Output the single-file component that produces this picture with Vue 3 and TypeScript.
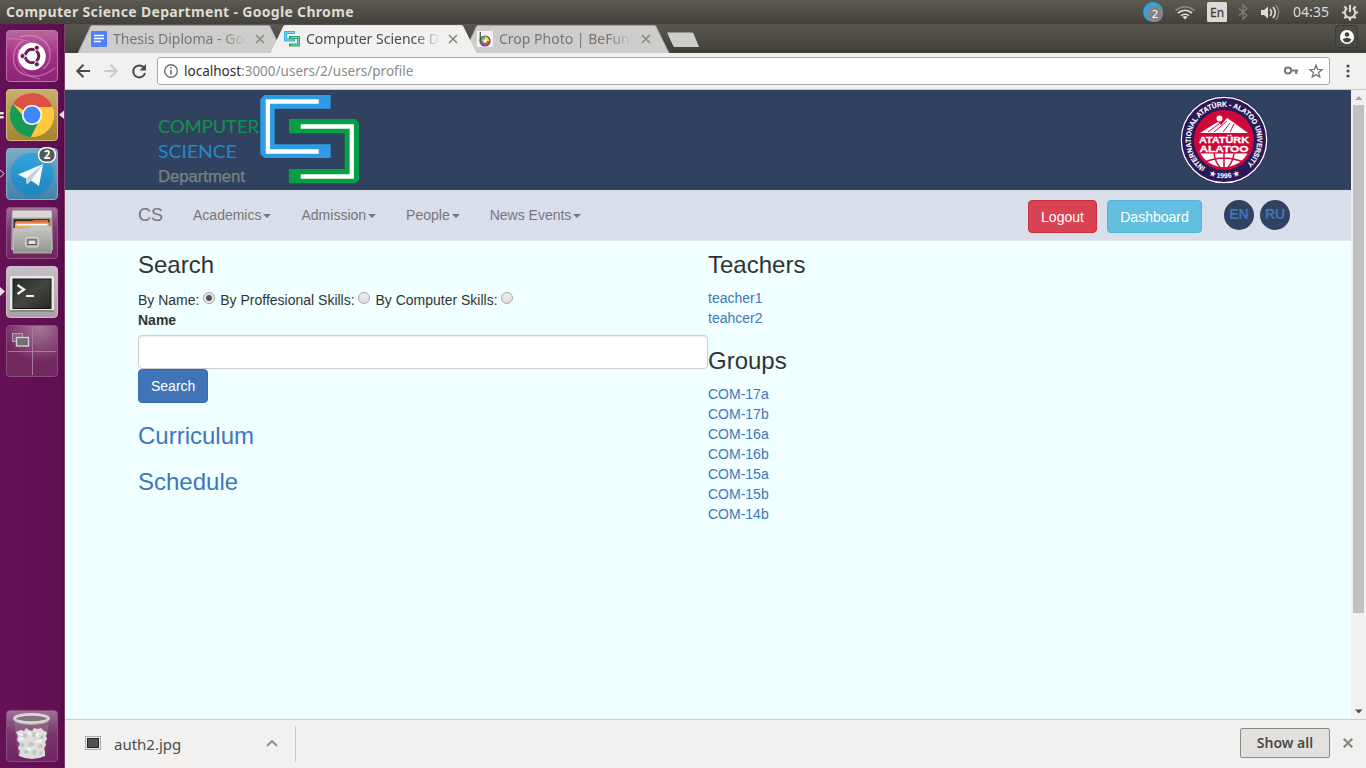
<script setup lang="ts">
import { ref } from 'vue'

interface Tab { title: string; icon: string; active: boolean }

const tabs: Tab[] = [
  { title: 'Thesis Diploma - Goo', icon: 'docs', active: false },
  { title: 'Computer Science D', icon: 'cs', active: true },
  { title: 'Crop Photo | BeFunk', icon: 'befunky', active: false },
]
const menu: string[] = ['Academics', 'Admission', 'People', 'News Events']
const filters: string[] = ['By Name:', 'By Proffesional Skills:', 'By Computer Skills:']
const teachers: string[] = ['teacher1', 'teahcer2']
const groups: string[] = ['COM-17a', 'COM-17b', 'COM-16a', 'COM-16b', 'COM-15a', 'COM-15b', 'COM-14b']
const selected = ref<number>(0)
const query = ref<string>('')
</script>

<template>
  <div class="desktop">
    <header class="topbar">
      <span class="wtitle">Computer Science Department - Google Chrome</span>
      <svg class="indicators" width="236" height="24" viewBox="1130 0 236 24">
        <circle cx="1153" cy="12" r="10" fill="#2ca5e0" />
        <circle cx="1155" cy="14" r="8" fill="#858585" />
        <text x="1155" y="18" font-size="11" text-anchor="middle" fill="#fff">2</text>
        <g fill="none" stroke-width="1.6">
          <path d="M1175.500 10.500q9.500-7.500 19 0" stroke="#8a8880" />
          <path d="M1178 13q7-5.500 14 0M1181 15.700q4-3 8 0" stroke="#e4e0d8" />
        </g>
        <path d="M1182.500 17q2.500-2 5 0l-2.500 2.500z" fill="#e4e0d8" />
        <rect x="1207" y="2" width="20" height="20" rx="1.500" fill="#dfdbd2" />
        <text x="1210" y="17" font-size="13" fill="#403f3a" stroke="#403f3a" stroke-width=".3" textLength="14" lengthAdjust="spacingAndGlyphs">En</text>
        <path d="M1239 8.500l8 7-4 3.500v-14l4 3.500-8 7" fill="none" stroke="#817f77" stroke-width="1.300" />
        <path d="M1261 10h3l4-3.500v12l-4-3.500h-3z" fill="#dfdbd2" />
        <path d="M1270 9q3 3.500 0 7M1273 7q4.500 5.500 0 11" fill="none" stroke="#dfdbd2" stroke-width="1.600" />
        <path d="M1276 5q5.500 7.500 0 15" fill="none" stroke="#8a8880" stroke-width="1.500" />
        <text x="1293" y="17" font-size="14" fill="#dfdbd2" textLength="36">04:35</text>
        <g fill="none" stroke="#dfdbd2">
          <path d="M1347.200 8.200a5.200 5.200 0 1 0 5.600 0" stroke-width="2" />
          <path d="M1350 5v7" stroke-width="2" />
          <path d="M1342 12.500h3M1355 12.500h3M1344.300 6.500l2 2M1355.700 6.500l-2 2M1344.300 18.300l2-2M1355.700 18.300l-2-2M1350 18v2.500" stroke-width="2.200" />
        </g>
      </svg>
    </header>

    <div class="workspace">
      <aside class="launcher">
        <svg width="65" height="744" viewBox="0 24 65 744">
          <defs>
            <linearGradient id="ubu" x1="0" y1="0" x2="0" y2="1"><stop offset="0" stop-color="#b9689d" /><stop offset=".5" stop-color="#a52e86" /><stop offset="1" stop-color="#8d2474" /></linearGradient>
            <linearGradient id="gold" x1="0" y1="0" x2="0" y2="1"><stop offset="0" stop-color="#c7b06e" /><stop offset="1" stop-color="#a58330" /></linearGradient>
            <linearGradient id="tgt" x1="0" y1="0" x2="0" y2="1"><stop offset="0" stop-color="#80a9c2" /><stop offset="1" stop-color="#4080ac" /></linearGradient>
            <linearGradient id="tg" x1="0" y1="0" x2="0" y2="1"><stop offset="0" stop-color="#34a6dc" /><stop offset="1" stop-color="#1d85bd" /></linearGradient>
            <linearGradient id="glass" x1="0" y1="0" x2="0" y2="1"><stop offset="0" stop-color="#a27299" /><stop offset=".45" stop-color="#76366c" /><stop offset="1" stop-color="#6e2560" /></linearGradient>
            <linearGradient id="term" x1="0" y1="0" x2="0" y2="1"><stop offset="0" stop-color="#c8bec7" /><stop offset="1" stop-color="#aba0aa" /></linearGradient>
            <linearGradient id="cab" x1="0" y1="0" x2="0" y2="1"><stop offset="0" stop-color="#c8c8c4" /><stop offset="1" stop-color="#92928f" /></linearGradient>
            <linearGradient id="scr" x1="0" y1="0" x2="1" y2="1"><stop offset="0" stop-color="#292927" /><stop offset=".5" stop-color="#444541" /><stop offset="1" stop-color="#272725" /></linearGradient>
            <radialGradient id="shine" cx=".65" cy="0" r=".75"><stop offset="0" stop-color="#fff" stop-opacity=".38" /><stop offset="1" stop-color="#fff" stop-opacity="0" /></radialGradient>
          </defs>

          <!-- dash -->
          <rect x="6.500" y="30.500" width="51" height="51" rx="3.500" fill="url(#ubu)" stroke="#bd74a8" />
          <g fill="none" stroke="#e2a8d0" stroke-opacity=".5">
            <path d="M20 37c16-5 31 4 30 19 0 6-3 10-7 13" stroke-width="1.500" />
            <path d="M55 68c-16 13-37 10-41-5-2-10 2-18 9-22" stroke-width="1.500" />
            <path d="M8 39c20-2 38 8 34 25" /><path d="M40 79c-18-3-26-16-21-30" />
          </g>
          <circle cx="32" cy="56.500" r="13.800" fill="#fff" />
          <circle cx="32" cy="56" r="6.800" fill="none" stroke="#681d56" stroke-width="3" />
          <g stroke="#fff" stroke-width="1.400"><path d="M32 56h-10M32 56l5.500-9M32 56l5.500 9" /></g>
          <circle cx="32" cy="56" r="5" fill="#fff" />
          <g fill="#681d56" stroke="#fff" stroke-width=".8"><circle cx="22.500" cy="56" r="2.500" /><circle cx="36.800" cy="47.700" r="2.500" /><circle cx="36.800" cy="64.300" r="2.500" /></g>

          <!-- browser -->
          <rect x="6.500" y="89.500" width="51" height="51" rx="3.500" fill="url(#gold)" stroke="#d0bc82" />
          <circle cx="32" cy="115" r="22" fill="#fdca3b" />
          <path d="M32 115L12.900 104A22 22 0 0 1 52.500 107H32z" fill="#dc5145" />
          <path d="M32 115L31 137A22 22 0 0 1 12.900 104L24 117z" fill="#179957" />
          <path d="M24 117L39 121 31 137A22 22 0 0 1 22 134z" fill="#179957" />
          <path d="M32 107h20.500A22 22 0 0 1 31 137l9-17z" fill="#fdca3b" />
          <circle cx="32" cy="115" r="10.200" fill="#f5f5f5" /><circle cx="32" cy="115" r="8.400" fill="#4285f4" />
          <path d="M0 112h3q2 1 0 2.500H0zM0 116h3q2 1 0 2.500H0zM64 110.500v8.500l-5-4.300z" fill="#e5dfe4" />

          <!-- messenger -->
          <rect x="6.500" y="148.500" width="51" height="51" rx="3.500" fill="url(#tgt)" stroke="#86b0cb" />
          <circle cx="32" cy="174" r="21.500" fill="url(#tg)" />
          <path d="M18 174.500l25-10.500-4 22-8-5.500-4 4-1-6z" fill="#f4f9fc" /><path d="M26 178.500l17-14.500-12 16.500-4 4z" fill="#bdd2df" />
          <rect x="38.500" y="147.700" width="17" height="14.600" rx="7.300" fill="#575653" stroke="#fff" stroke-width="1.500" />
          <text x="47" y="159" font-size="11.500" font-weight="bold" text-anchor="middle" fill="#fff">2</text>
          <path d="M0 169.700l4 4-4 4" fill="none" stroke="#e5dfe4" />

          <!-- files -->
          <rect x="6.500" y="207.500" width="51" height="51" rx="3.500" fill="url(#glass)" stroke="#8c5583" />
          <path d="M12 211h40l1 39H11z" fill="#a5a5a2" /><path d="M13 210.500h38l1 7H12z" fill="#d8d8d4" />
          <path d="M13.500 219h36v12h-36z" fill="#3d332e" /><path d="M16 221h16l2-1h14v8H16z" fill="#da6939" /><path d="M15 222.500h34v6.500H15z" fill="#f0a850" /><path d="M16.500 224h31v1.500h-31z" fill="#fff" />
          <path d="M13.500 228.500h15l1.500-2h21.500V253h-38z" fill="url(#cab)" stroke="#bcbcb9" stroke-width=".8" />
          <rect x="25.500" y="237.500" width="13" height="9.500" rx="2" fill="#ababa8" stroke="#dcdcda" /><rect x="28" y="240" width="8" height="4.500" fill="#e6e6e4" stroke="#555" />

          <!-- terminal -->
          <rect x="6.500" y="266.500" width="51" height="51" rx="3.500" fill="url(#term)" stroke="#c9c0c8" />
          <rect x="10" y="276" width="44" height="36" rx="2" fill="#e9e9e6" /><path d="M10 310h44v2H10z" fill="#8a8a87" />
          <rect x="13" y="279" width="38" height="29.500" fill="url(#scr)" stroke="#161615" />
          <path d="M17.500 285l6.500 4.500-6.500 4.500" fill="none" stroke="#f1f1ef" stroke-width="2.400" /><path d="M26 296h8" stroke="#f1f1ef" stroke-width="2" />
          <path d="M0 287l5 4.500-5 4.500z" fill="#e5dfe4" />

          <!-- workspace switcher -->
          <rect x="6.500" y="325.500" width="51" height="51" rx="3.500" fill="#70285f" stroke="#8a4e7d" />
          <rect x="7" y="326" width="50" height="50" rx="3" fill="url(#shine)" />
          <path d="M32.500 327v48M8 351.500h48" stroke="#a77a9f" />
          <rect x="12.500" y="333.500" width="10" height="8" fill="#8a6683" stroke="#b5a0b1" /><rect x="16.500" y="337.500" width="12" height="8.500" fill="#75706f" stroke="#ddd3da" stroke-width="1.300" />

          <!-- trash -->
          <rect x="6.500" y="710.500" width="51" height="51" rx="3.500" fill="url(#glass)" stroke="#8a4e7d" />
          <path d="M14 720l4 35q14 6 27 0l4-35z" fill="#a48a9d" fill-opacity=".35" />
          <path d="M18 731l3-1 3 1 2-3 3 2 3 1 2-3 4 1 3-1 3 3 3 1-1 4 1 3-2 3 1 3-2 3 1 4v4q-13 6-26 0l1-5-2-3 2-4-3-4 1-4-2-4z" fill="#dddedb" />
          <g fill="#c2c3bf"><path d="M24 733l3 2-1 3-4-1zM33 732l3 1-1 5-3-2zM41 735l3 1-2 4-3-1zM21 743l4 1-2 3-3-1zM29 742l5 1-1 3-5 0zM38 745l4-1 1 3-4 2zM23 751l4-1 2 3-4 1zM33 750l4 1-2 4-3-1zM40 752l3-1-1 4-3 0z" /></g>
          <path d="M19 740l5-2M28 732l3 3M36 742l6-2M27 748l4 2M36 736l3-3M20 734l3 1" stroke="#f6f6f4" stroke-width="2" />
          <ellipse cx="31.500" cy="718.500" rx="17" ry="4.200" fill="#85717f" stroke="#d8d9d4" stroke-width="2.800" /><path d="M14.500 720q1 4 17 4.500 16-.5 17-4.500" fill="none" stroke="#a9aaa5" />
        </svg>
      </aside>

      <section class="browser">
        <div class="tabstrip">
          <div v-for="t in tabs" :key="t.title" class="tab" :class="{ active: t.active }">
            <svg class="shape" width="206" height="28" viewBox="0 0 206 28">
              <path d="M0 28L12.500 1.500Q13 .5 14 .5H190.500Q191.500 .5 192 1.500L205 28" :fill="t.active ? '#f2f1f0' : '#cfcdcb'" :stroke="t.active ? '#f8f7f6' : '#a9a7a4'" stroke-width=".8" />
            </svg>
            <svg v-if="t.icon === 'docs'" class="fav" viewBox="0 0 16 16"><rect width="16" height="16" rx="1" fill="#4f80f5" /><path d="M3 4.500h10M3 7.500h10M3 10.500h7" stroke="#fff" stroke-width="1.400" /></svg>
            <svg v-else-if="t.icon === 'cs'" class="fav" viewBox="0 0 16 16"><path d="M11 1.500H1.500V9H11" fill="none" stroke="#38b0e8" stroke-width="3" /><path d="M5 6.500h9.500V14H5" fill="none" stroke="#28a965" stroke-width="3" /><path d="M10 1.500H1.500V9H9M7 6.500h7.500V14H7" fill="none" stroke="#9fdfe8" stroke-width=".7" /></svg>
            <svg v-else class="fav" viewBox="0 0 16 16">
              <rect width="16" height="16" fill="#f4f4f6" />
              <path d="M8 10V5.500A4.500 4.500 0 0 1 12.500 10z" fill="#f5df20" /><path d="M8 10h4.500A4.500 4.500 0 0 1 8 14.500z" fill="#ef5038" /><path d="M8 10v4.500A4.500 4.500 0 0 1 3.500 10z" fill="#a34cd0" /><path d="M8 10H3.500A4.500 4.500 0 0 1 8 5.500z" fill="#54c558" />
              <circle cx="8" cy="10" r="1.800" fill="#fff" /><circle cx="8" cy="10" r="5" fill="none" stroke="#47474e" stroke-width="1.200" /><path d="M3.300 1v9" stroke="#47474e" stroke-width="1.200" />
            </svg>
            <span class="ttl">{{ t.title }}</span>
            <svg class="tx" width="10" height="10" viewBox="0 0 10 10"><path d="M1 1l8 8M9 1l-8 8" stroke="#8b8985" stroke-width="1.700" /></svg>
          </div>
          <svg class="newtab" width="34" height="16" viewBox="0 0 34 16"><path d="M1 .5h25q1 0 1.500 1L33 15H9q-1.500 0-2-1.500z" fill="#cfcdcb" /></svg>
          <svg class="avatar" width="24" height="24" viewBox="0 0 24 24"><rect x=".5" y=".5" width="22" height="22" rx="3" fill="#4b4a44" stroke="#3a3935" /><circle cx="12" cy="12" r="7" fill="#fff" /><circle cx="12" cy="9.500" r="2.300" fill="#44433e" /><path d="M7.500 14.500q4.500-3.400 9 0-1.800 3-4.500 3t-4.500-3z" fill="#44433e" /></svg>
        </div>

        <div class="toolbar">
          <svg class="navicons" width="92" height="36" viewBox="65 53 92 36">
            <g fill="none" stroke-width="2"><path d="M90 71H77.500M83.500 64.800L77.300 71l6.200 6.200" stroke="#4a4a4a" /><path d="M104 71h12.500M110.500 64.800l6.200 6.200-6.200 6.200" stroke="#cbcac8" /><path d="M143.800 67.500A6 6 0 1 0 145 73" stroke="#4a4a4a" /></g>
            <path d="M146 64v6.500h-6.500z" fill="#4a4a4a" />
          </svg>
          <div class="omnibox">
            <svg width="16" height="16" viewBox="0 0 16 16"><circle cx="8" cy="8" r="6.300" fill="none" stroke="#707070" stroke-width="1.400" /><path d="M8 7v4.500M8 4v1.600" stroke="#707070" stroke-width="1.600" /></svg>
            <span class="url"><b>localhost</b>:3000/users/2/users/profile</span>
            <svg width="42" height="18" viewBox="0 0 42 18"><circle cx="5" cy="8.500" r="3.100" fill="none" stroke="#777" stroke-width="2" /><path d="M8 8.500h7M13.200 8v4" stroke="#777" stroke-width="2.200" /><path d="M33 3.200l1.600 4.200 4.500.3-3.500 2.900 1.200 4.500-3.800-2.500-3.800 2.500 1.200-4.500-3.500-2.900 4.500-.3z" fill="none" stroke="#777" stroke-width="1.300" /></svg>
          </div>
          <svg class="dots" width="6" height="16" viewBox="0 0 6 16"><g fill="#4d4d4d"><circle cx="3" cy="3" r="1.600" /><circle cx="3" cy="8" r="1.600" /><circle cx="3" cy="13" r="1.600" /></g></svg>
        </div>

        <div class="viewport">
          <main class="page">
            <div class="banner">
              <svg width="210" height="100" viewBox="155 90 210 100">
                <g class="gothic" font-size="17.800">
                  <text x="158" y="133" fill="#0b9747" textLength="101" lengthAdjust="spacingAndGlyphs">COMPUTER</text>
                  <text x="158" y="158" fill="#2886cf" textLength="79" lengthAdjust="spacingAndGlyphs">SCIENCE</text>
                </g>
                <text class="dept" x="158" y="182" font-size="16" fill="#7e8084" stroke="#7e8084" stroke-width=".25" textLength="87" lengthAdjust="spacingAndGlyphs">Department</text>
                <path d="M264.300 95H330.700V108.700H274.700V144.300H330.700V158H264.300L260.300 154V99z" fill="#2e9be5" />
                <path d="M318.700 101.500H267.900V151.500H318.700" fill="none" stroke="#fff" stroke-width="4.300" />
                <path d="M289 119H355.500L359 122.500V180L355.500 183.300H289V169H344.700V133.300H289z" fill="#069f44" />
                <path d="M300.700 126.500H351.800V176.500H300.700" fill="none" stroke="#fff" stroke-width="4.300" />
              </svg>
              <svg class="seal" width="90" height="90" viewBox="-45 -45 90 90">
                <defs><path id="ring" d="M-18.600 27.600A33.300 33.300 0 1 1 21.500 25.400" /><path id="foot" d="M-22 31.200A38.200 38.200 0 0 0 22 31.200" /></defs>
                <circle r="44" fill="#2b1959" /><circle r="42.700" fill="none" stroke="#fff" stroke-width="1.300" />
                <circle r="30" fill="#d0073a" />
                <g class="sealtext" fill="#fff" font-weight="bold">
                  <text font-size="7.200" stroke="#fff" stroke-width=".15"><textPath href="#ring" textLength="164" lengthAdjust="spacingAndGlyphs">INTERNATIONAL ATATÜRK - ALATOO UNIVERSITY</textPath></text>
                  <text font-size="7"><textPath href="#foot" startOffset="50%" text-anchor="middle">★ 1996 ★</textPath></text>
                  <g stroke="#fff" stroke-width=".3">
                    <text x="-25" y="2.600" font-size="9.800" textLength="50" lengthAdjust="spacingAndGlyphs">ATATÜRK</text>
                    <text x="-24.500" y="12" font-size="9.300" textLength="49" lengthAdjust="spacingAndGlyphs">ALATOO</text>
                  </g>
                </g>
                <circle cx="-4.500" cy="-21.500" r="3" fill="#fff" />
                <path d="M-24-7L-9-16.500-6-18-3-15 3-22 9-18 24-7z" fill="#fff" />
                <path d="M-16-8l11-8M-10-8L3-19M-1-8l7-9M6-8l4-8" stroke="#d0073a" stroke-width="1" />
                <path d="M-23.500 13.500H23.500A27 27 0 0 1-23.500 13.500z" fill="#fff" />
                <path d="M0 13v15M-10 13q1 9 6 14M10 13q-1 9-6 14M-19 22q19-8 38 0" fill="none" stroke="#d0073a" stroke-width="1.500" />
              </svg>
            </div>

            <nav class="navbar">
              <a class="brand">CS</a>
              <a v-for="m in menu" :key="m" class="item">{{ m }}<i class="caret"></i></a>
              <span class="grow"></span>
              <button class="btn danger">Logout</button>
              <button class="btn info">Dashboard</button>
              <a class="lang">EN</a>
              <a class="lang">RU</a>
            </nav>

            <div class="columns">
              <div class="col">
                <h3>Search</h3>
                <div class="radios">
                  <label v-for="(f, i) in filters" :key="f">{{ f }}<input v-model="selected" type="radio" name="filter" :value="i"></label>
                </div>
                <label class="fieldname" for="query">Name</label>
                <input id="query" v-model="query" class="field" type="text">
                <button class="btn primary">Search</button>
                <h3><a>Curriculum</a></h3>
                <h3><a>Schedule</a></h3>
              </div>
              <div class="col">
                <h3>Teachers</h3>
                <ul><li v-for="t in teachers" :key="t"><a>{{ t }}</a></li></ul>
                <h3>Groups</h3>
                <ul><li v-for="g in groups" :key="g"><a>{{ g }}</a></li></ul>
              </div>
            </div>
          </main>
          <div class="scrollbar">
            <svg width="15" height="15" viewBox="0 0 15 15"><path d="M4 10h7.500L7.800 6z" fill="#a3a3a3" /></svg>
            <div class="thumb"></div>
            <svg width="15" height="15" viewBox="0 0 15 15"><path d="M4 5.500h7.500L7.800 9.500z" fill="#505050" /></svg>
          </div>
        </div>

        <footer class="shelf">
          <svg class="thumbicon" width="16" height="14" viewBox="0 0 16 14"><rect x=".5" y=".5" width="15" height="13" fill="#eee" stroke="#aaa" /><rect x="2.500" y="2.500" width="11" height="9" fill="#505150" stroke="#222" /></svg>
          <span class="file">auth2.jpg</span>
          <svg class="chev" width="12" height="8" viewBox="0 0 12 8"><path d="M1 7l5-5 5 5" fill="none" stroke="#8b8b89" stroke-width="1.800" /></svg>
          <span class="sep"></span>
          <span class="grow"></span>
          <button class="showall">Show all</button>
          <svg class="sx" width="10" height="10" viewBox="0 0 10 10"><path d="M.7.7l8.600 8.600M9.300.7L.7 9.300" stroke="#888683" stroke-width="2.200" /></svg>
        </footer>
      </section>
    </div>
  </div>
</template>

<style>
body { margin: 0; overflow: hidden; }
</style>

<style scoped>
* { box-sizing: border-box; }
svg { display: block; flex: none; }
.desktop { width: 1366px; height: 768px; display: flex; flex-direction: column; overflow: hidden; font-family: "Noto Sans", "Open Sans", sans-serif; }
.topbar { height: 24px; flex: none; display: flex; justify-content: space-between; align-items: center; padding-left: 6px; background: linear-gradient(#5c5a51, #42413b); color: #dfdbd2; }
.wtitle { font-size: 14px; font-weight: 700; line-height: 24px; letter-spacing: .32px; white-space: nowrap; }
.workspace { flex: 1; display: flex; min-height: 0; }
.launcher { width: 65px; background: linear-gradient(90deg, #651156, #5f0f50 59px, #530b46 64px, #7d436f 64px); }
.browser { flex: 1; display: flex; flex-direction: column; min-width: 0; }
.tabstrip { height: 29px; flex: none; display: flex; align-items: flex-end; padding-left: 12.500px; background: linear-gradient(#59574f, #3f3e39); }
.tab { position: relative; width: 205px; height: 28px; margin-right: -12px; display: flex; align-items: center; padding-left: 13.500px; color: #777573; }
.tab.active { z-index: 1; color: #4a4a48; }
.shape { position: absolute; left: 0; top: 0; }
.fav { position: relative; width: 16px; height: 16px; }
.ttl { position: relative; width: 135px; margin-left: 6px; overflow: hidden; white-space: nowrap; font-size: 14px; line-height: 28px; height: 28px; -webkit-mask-image: linear-gradient(90deg, #000 108px, transparent 134px); mask-image: linear-gradient(90deg, #000 108px, transparent 134px); }
.tx { position: relative; margin-left: 7px; }
.newtab { align-self: center; margin: 2px 0 0 9.500px; }
.avatar { margin: 0 7px 4px auto; }
.toolbar { height: 37px; flex: none; display: flex; align-items: center; background: #f2f1f0; border-bottom: 1px solid #c9c7c5; }
.omnibox { width: 1173px; height: 28px; display: flex; align-items: center; padding: 0 4px 0 5px; background: #fff; border: 1px solid #aaa8a5; border-radius: 3px; }
.url { flex: 1; margin-left: 5px; font-size: 13.5px; color: #8b8b8b; }
.url b { font-weight: 400; color: #303030; }
.dots { margin-left: 15px; }
.viewport { flex: 1; min-height: 0; display: flex; }
.page { width: 1286px; background: #f0ffff; color: #333; font: 14px/20px "Liberation Sans", Arial, sans-serif; }
.banner { height: 100px; display: flex; justify-content: space-between; padding: 0 82px 0 90px; background: #314260; }
.gothic { font-family: Lato, sans-serif; font-weight: 400; }
.dept { font-family: "Liberation Sans", Arial, sans-serif; }
.seal { margin-top: 5px; }
.sealtext { font-family: "Liberation Sans", Arial, sans-serif; }
.navbar { height: 51px; display: flex; padding: 0 61px 0 73px; background: #d8deea; border-bottom: 1px solid #e2e5e8; color: #777; }
.brand { font-size: 18px; line-height: 50px; margin-right: 15px; }
.item { padding: 15px; display: flex; align-items: center; line-height: 20px; }
.caret { margin: 2px 0 0 2px; border: 4px solid transparent; border-top-color: #777; border-bottom: 0; }
.grow { flex: 1; }
.btn { font: 14px/20px "Liberation Sans", Arial, sans-serif; padding: 6px 12px; color: #fff; border: 1px solid; border-radius: 4px; height: 34px; }
.navbar .btn { height: 33px; margin: 10px 10px 0 0; padding: 6px 0; }
.danger { width: 69px; background: #d84453; border-color: #cb2d41; }
.info { width: 95px; background: #62bfdf; border-color: #4fb5d7; }
.primary { display: block; background: #4074b7; border-color: #386aa9; }
.lang { width: 30px; height: 30px; margin: 10px 0 0 6px; border-radius: 50%; background: #314260; color: #3f72b8; font-weight: 700; line-height: 28px; text-align: center; }
.info + .lang { margin-left: 12px; }
.columns { display: flex; padding: 11px 73px 0; }
.col { width: 570px; }
h3 { margin: 20px 0 10px; font-size: 24px; line-height: 26px; font-weight: 500; }
.col > h3:first-child { margin-top: 0; }
a { color: #4276bb; }
.navbar a { color: #777; }
.navbar a.lang { color: #3f72b8; }
ul { list-style: none; margin: 0 0 10px; padding: 0; }
.radios { height: 22px; display: flex; padding-top: 2px; }
.radios label { display: flex; margin-right: 5px; }
.radios input { appearance: none; width: 12px; height: 12px; margin: 2px 0 0 3.800px; border: 1px solid #a9a9a9; border-radius: 50%; background: linear-gradient(#eee, #dcdcdc); }
.radios input:checked { background: radial-gradient(circle, #555 2.500px, #e6e6e6 3.500px); }
.fieldname { display: block; font-weight: 700; margin-bottom: 5px; }
.field { display: block; width: 570px; height: 34px; border: 1px solid #ccc; border-radius: 4px; background: #fff; box-shadow: inset 0 1px 1px rgba(0, 0, 0, .075); padding: 6px 12px; }
.scrollbar { width: 15px; background: #f1f1f1; display: flex; flex-direction: column; }
.thumb { width: 11px; height: 508px; margin: 0 0 91px 2px; background: #c1c1c1; }
.shelf { height: 49px; flex: none; display: flex; align-items: center; padding: 0 13px 2px 20px; background: #f2f1f0; border-top: 1px solid #c8cdcd; color: #4d4d4b; }
.file { margin: 2px 0 0 13px; width: 152px; font-size: 15px; }
.sep { width: 1px; height: 36px; margin: 2px 0 0 17px; background: #cbc9c7; }
.showall { width: 90px; height: 30px; border: 1px solid #8b8986; border-radius: 2px; background: #e3e1df; color: #4d4b48; font: 600 14px "Noto Sans", sans-serif; padding: 0 0 2px; }
.sx { margin-left: 13px; }
</style>
